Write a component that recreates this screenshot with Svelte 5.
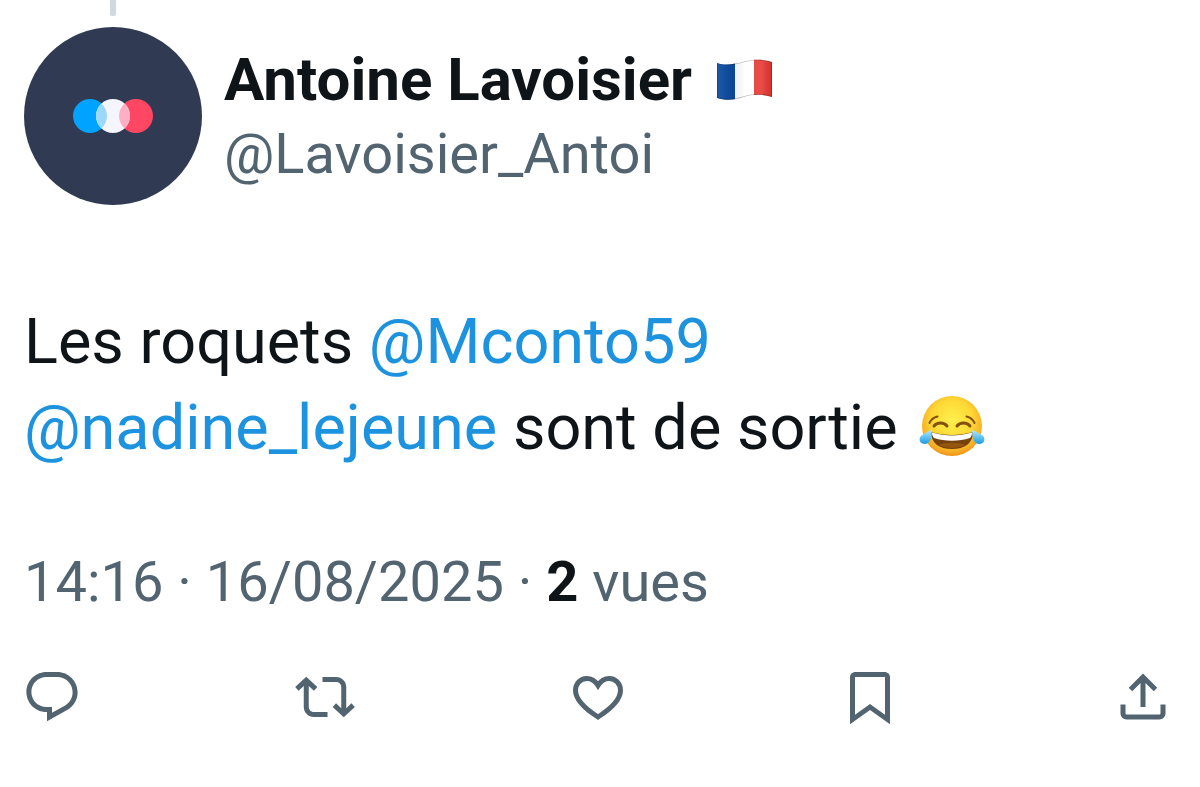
<script>
	const tweet = {
		name: 'Antoine Lavoisier',
		handle: 'Lavoisier_Antoi',
		time: '14:16',
		date: '16/08/2025',
		views: 2
	};

	const actions = [
		{
			label: 'Répondre',
			path: 'M1.751 10c0-4.42 3.584-8 8.005-8h4.366c4.49 0 8.129 3.64 8.129 8.13 0 2.96-1.607 5.68-4.196 7.11l-8.054 4.46v-3.69h-.067c-4.49.1-8.183-3.51-8.183-8.01zm8.005-6c-3.317 0-6.005 2.69-6.005 6 0 3.37 2.77 6.08 6.138 6.01l.351-.01h1.761v2.3l5.087-2.81c1.951-1.08 3.163-3.13 3.163-5.36 0-3.39-2.744-6.13-6.129-6.13H9.756z'
		},
		{
			label: 'Reposter',
			path: 'M4.5 3.88l4.432 4.14-1.364 1.46L5.5 7.55V16c0 1.1.896 2 2 2H13v2H7.5c-2.209 0-4-1.79-4-4V7.55L1.432 9.48.068 8.02 4.5 3.88zM16.5 6H11V4h5.5c2.209 0 4 1.79 4 4v8.45l2.068-1.93 1.364 1.46-4.432 4.14-4.432-4.14 1.364-1.46 2.068 1.93V8c0-1.1-.896-2-2-2z'
		},
		{
			label: "J'aime",
			stroke: true,
			path: 'M12 7.4C10.9 5.6 9.3 4.6 7.5 4.6 4.9 4.6 3 6.7 3 9.3 3 13.3 7 16.8 12 20c5-3.2 9-6.7 9-10.7 0-2.6-1.9-4.7-4.5-4.7-1.8 0-3.4 1-4.5 2.8z'
		},
		{
			label: 'Signet',
			path: 'M4 4.2C4 2.9 4.9 2 6.2 2h11.6C19.1 2 20 2.9 20 4.2v18.74l-8-5.71-8 5.71V4.2zM6 4v15.06l6-4.29 6 4.29V4H6z'
		},
		{
			label: 'Partager',
			path: 'M12 2.59l5.7 5.7-1.41 1.42L13 6.41V16h-2V6.41l-3.3 3.3-1.41-1.42L12 2.59zM21 15v3.5c0 1.38-1.12 2.5-2.5 2.5h-13C4.11 21 3 19.88 3 18.5V15h2v3.5c0 .28.22.5.5.5h13c.28 0 .5-.22.5-.5V15h2z'
		}
	];
</script>

<article class="tweet">
	<div class="thread-line"></div>

	<header>
		<svg class="avatar" viewBox="0 0 178 178" role="img" aria-label={tweet.name}>
			<circle cx="89" cy="89" r="89" fill="#303a52" />
			<circle cx="66" cy="89" r="17" fill="#00a3ff" />
			<circle cx="112" cy="89" r="17" fill="#ff4763" />
			<circle cx="89" cy="89" r="17" fill="#f5f6fd" />
			<path d="M77.500 76.500a17 17 0 0 1 0 25a17 17 0 0 1 0-25z" fill="#9bd8fa" />
			<path d="M100.500 76.500a17 17 0 0 1 0 25a17 17 0 0 1 0-25z" fill="#ffafc3" />
		</svg>
		<div class="author">
			<div class="name">
				<span>{tweet.name}</span>
				<svg class="flag" viewBox="0 0 57 42" role="img" aria-label="France">
					<defs>
						<linearGradient id="wave" x1="0" x2="1" y1="0" y2="0">
							<stop offset="0" stop-color="#fff" stop-opacity="0.1" />
							<stop offset="0.3" stop-color="#000" stop-opacity="0.06" />
							<stop offset="0.5" stop-color="#fff" stop-opacity="0.1" />
							<stop offset="0.8" stop-color="#fff" stop-opacity="0.12" />
							<stop offset="1" stop-color="#000" stop-opacity="0.08" />
						</linearGradient>
						<clipPath id="cloth">
							<path d="M1 4C10 7 19 5 28 2.500S47 0 56 3v35c-9-3-19-3-28 0S10 42 1 39z" />
						</clipPath>
					</defs>
					<g clip-path="url(#cloth)">
						<rect width="19" height="42" fill="#0b4aa0" />
						<rect x="19" width="19" height="42" fill="#ffffff" />
						<rect x="38" width="19" height="42" fill="#e6332f" />
						<rect width="57" height="42" fill="url(#wave)" />
						<path
							d="M1 4C10 7 19 5 28 2.500S47 0 56 3v35c-9-3-19-3-28 0S10 42 1 39z"
							fill="none"
							stroke="#000"
							stroke-opacity="0.25"
							stroke-width="1.500"
						/>
					</g>
				</svg>
			</div>
			<a class="handle" href="#profile">@{tweet.handle}</a>
		</div>
	</header>

	<p class="text">
		Les roquets <a href="#mconto">@Mconto59</a><br />
		<a href="#nadine">@nadine_lejeune</a> sont de sortie
		<svg class="joy" viewBox="0 0 66 62" role="img" aria-label="Mort de rire">
			<defs>
				<radialGradient id="face" cx="0.5" cy="0.4" r="0.62">
					<stop offset="0" stop-color="#fff04d" />
					<stop offset="0.55" stop-color="#fdd835" />
					<stop offset="0.85" stop-color="#f7ae25" />
					<stop offset="1" stop-color="#e88b16" />
				</radialGradient>
				<linearGradient id="tear" x1="0" x2="0" y1="0" y2="1">
					<stop offset="0" stop-color="#b8ecfa" />
					<stop offset="1" stop-color="#189be5" />
				</linearGradient>
			</defs>
			<circle cx="33" cy="31" r="30" fill="url(#face)" />
			<path d="M12 37c14 4 28 4 42 0 0 11-8 17-21 17S12 48 12 37z" fill="#75420c" />
			<path d="M13 37.500c13 4 27 4 40 0 0 2-.5 4-2 5.500-11 3.500-25 3.500-36 0-1.500-1.500-2-3.500-2-5.500z" fill="#fff" />
			<path d="M20 50c7-3 19-3 26 0-7 4-19 4-26 0z" fill="#94550f" />
			<g fill="none" stroke="#85500c" stroke-linecap="round">
				<path d="M15 31c3-4 10-4 13 0M38 31c3-4 10-4 13 0" stroke-width="3" />
				<path d="M10.500 28c1.500-3.500 4-5.500 8-6.500M55.500 28c-1.500-3.500-4-5.500-8-6.500" stroke-width="2" />
			</g>
			<path d="M12.500 34.500c1 7-1 14-6.500 14.500-5 .5-7-4.500-4-8C4.500 38 9 37.500 12.500 34.500z" fill="url(#tear)" />
			<path d="M53.500 34.500c-1 7 1 14 6.500 14.500 5 .5 7-4.500 4-8-2.500-3-7-3.500-10.500-6.500z" fill="url(#tear)" />
		</svg>
	</p>

	<p class="meta">
		<time datetime="2025-08-16T14:16">{tweet.time} · {tweet.date}</time> ·
		<strong>{tweet.views}</strong> vues
	</p>

	<div class="actions">
		{#each actions as action}
			<button type="button" aria-label={action.label}>
				<svg viewBox="0 0 24 24" class:stroke={action.stroke}>
					<path d={action.path} />
				</svg>
			</button>
		{/each}
	</div>
</article>

<style>
	:global(body) {
		margin: 0;
		background: #fff;
	}

	.tweet {
		padding: 0 24px 58px;
		color: #0f1419;
		font-family: Roboto, 'Liberation Sans', sans-serif;
	}

	.thread-line {
		width: 6px;
		height: 16px;
		margin-left: 86px;
		background: #cfd9de;
		border-radius: 0 0 2px 2px;
	}

	header {
		display: flex;
		align-items: center;
		gap: 22px;
		margin-top: 11px;
	}

	.avatar {
		flex: none;
		width: 178px;
		height: 178px;
	}

	.author {
		display: flex;
		flex-direction: column;
		padding-top: 2px;
	}

	.name {
		display: flex;
		align-items: center;
		gap: 24px;
		font-size: 60px;
		line-height: 74px;
		font-weight: 700;
	}

	.flag {
		width: 57px;
		height: 42px;
	}

	.handle {
		color: #536471;
		font-size: 56px;
		line-height: 74px;
		text-decoration: none;
	}

	.text {
		margin: 94px 0 0;
		font-size: 63px;
		line-height: 86px;
	}

	.text a {
		color: #1d93e0;
		text-decoration: none;
	}

	.joy {
		width: 66px;
		height: 62px;
		margin-left: 6px;
		vertical-align: -8px;
	}

	.meta {
		margin: 74px 0 0;
		color: #536471;
		font-size: 56px;
		line-height: 74px;
	}

	.meta strong {
		color: #0f1419;
	}

	.actions {
		display: flex;
		justify-content: space-between;
		margin: 48px 3px 0 -2px;
	}

	button {
		padding: 0;
		border: none;
		background: none;
		color: #536471;
		cursor: pointer;
	}

	button svg {
		display: block;
		width: 60px;
		height: 60px;
		fill: currentColor;
	}

	button svg.stroke {
		fill: none;
		stroke: currentColor;
		stroke-width: 2;
	}
</style>
